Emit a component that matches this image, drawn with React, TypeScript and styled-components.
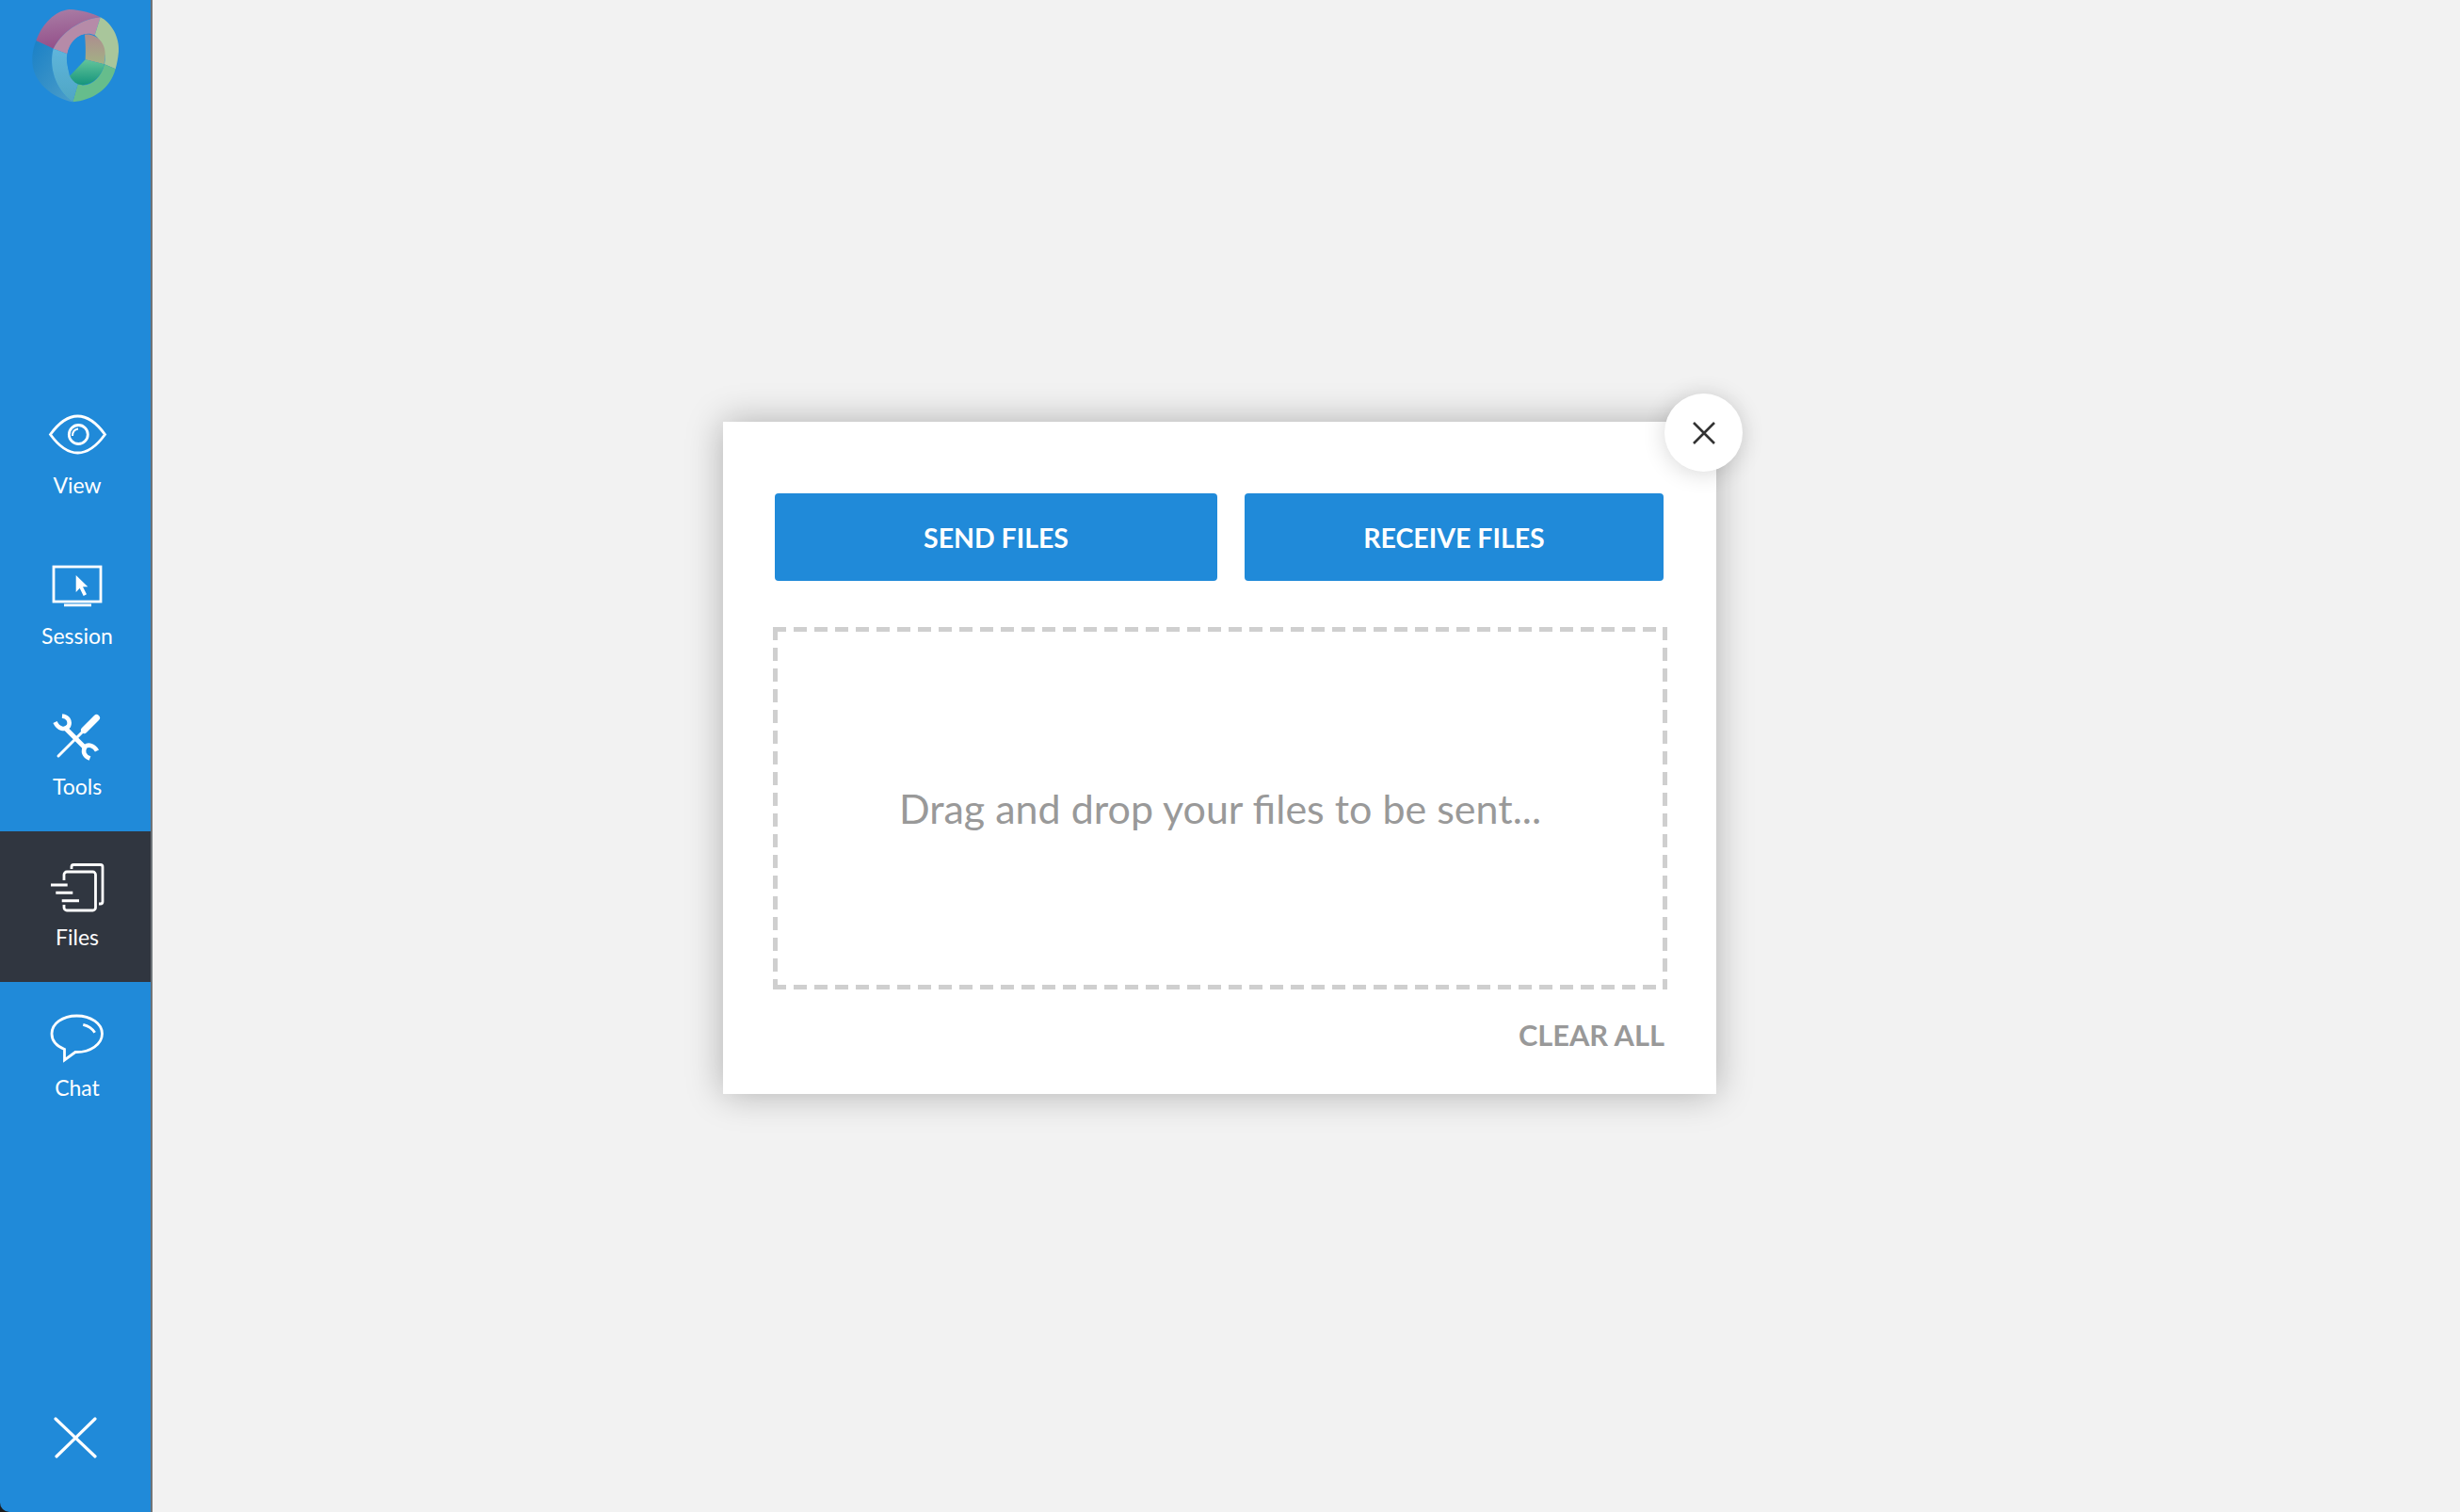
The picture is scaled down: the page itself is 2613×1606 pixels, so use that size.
import styled, { createGlobalStyle } from 'styled-components';
import type { ReactNode } from 'react';

const GlobalStyle = createGlobalStyle`
    html, body {
        margin: 0;
        padding: 0;
        background: #f2f2f2;
    }
    body {
        font-family: "Lato", "Open Sans", sans-serif;
    }
`

const Page = styled.div`
    display: flex;
    width: 2613px;
    height: 1606px;
    overflow: hidden;
    background: #1c1c1c;
`

const Sidebar = styled.nav`
    display: flex;
    flex-direction: column;
    flex-shrink: 0;
    width: 160px;
    height: 100%;
    background: #208ad9;
    border-right: 2px solid #6f7478;
    border-bottom-left-radius: 10px;
`

const LogoBlock = styled.div`
    height: 403px;
`

const NavItem = styled.div<{ $active?: boolean }>`
    display: flex;
    flex-direction: column;
    align-items: center;
    height: 160px;
    padding: 28px 0 0 4px;
    box-sizing: border-box;
    background: ${(p) => (p.$active ? '#303640' : 'transparent')};
`

const NavIcon = styled.svg`
    display: block;
    width: 64px;
    height: 64px;
    fill: none;
    stroke: #fff;
    stroke-width: 2.8;
`

const NavLabel = styled.span`
    margin-top: 5px;
    color: #fff;
    font-size: 23px;
    line-height: 30px;
`

const ExitButton = styled.div`
    display: flex;
    align-items: center;
    justify-content: center;
    height: 158px;
    margin-top: auto;
`

const Main = styled.main`
    flex-grow: 1;
    padding: 448px 0 0 606px;
    background: #f2f2f2;
`

const Modal = styled.section`
    position: relative;
    width: 1055px;
    height: 714px;
    padding: 76px 52px 0 53px;
    box-sizing: border-box;
    background: #fff;
    box-shadow: 0 0 36px rgba(0, 0, 0, 0.28);
`

const CloseButton = styled.div`
    position: absolute;
    top: -30px;
    right: -28px;
    display: flex;
    align-items: center;
    justify-content: center;
    width: 83px;
    height: 83px;
    border-radius: 50%;
    background: #fff;
    box-shadow: 0 2px 24px rgba(0, 0, 0, 0.16);
`

const ButtonRow = styled.div`
    display: grid;
    grid-template-columns: 470px 445px;
    gap: 29px;
    padding-left: 2px;
`

const ActionButton = styled.div`
    display: flex;
    align-items: center;
    justify-content: center;
    height: 93px;
    border-radius: 4px;
    background: #208ad9;
    color: #fff;
    font-size: 28.5px;
    font-weight: 700;
`

// the browser's own dashed border comes out too short, so the dashes are painted
const DropZone = styled.div`
    display: flex;
    align-items: center;
    justify-content: center;
    height: 385px;
    margin-top: 49px;
    color: #999;
    font-size: 43px;
    background-image:
        repeating-linear-gradient(90deg, #cfcfcf 0 14px, transparent 14px 22px),
        repeating-linear-gradient(90deg, #cfcfcf 0 14px, transparent 14px 22px),
        repeating-linear-gradient(180deg, #cfcfcf 0 14px, transparent 14px 22px),
        repeating-linear-gradient(180deg, #cfcfcf 0 14px, transparent 14px 22px);
    background-size: 100% 5px, 100% 5px, 5px 100%, 5px 100%;
    background-position: 0 0, 0 100%, 0 0, 100% 0;
    background-repeat: no-repeat;
`

const ClearAll = styled.div`
    margin-top: 29px;
    padding-right: 3px;
    color: #999;
    font-size: 30.8px;
    font-weight: 700;
    line-height: 40px;
    text-align: right;
`

const Logo = () => (
    <svg width="160" height="130" viewBox="0 0 480 390">
        <defs>
            <linearGradient id="wallPurple" x1="0" y1="0" x2="0.2" y2="1">
                <stop offset="0" stopColor="#aa7fa6" />
                <stop offset="1" stopColor="#94508a" />
            </linearGradient>
            <linearGradient id="wallBlue" x1="0" y1="0" x2="1" y2="1">
                <stop offset="0" stopColor="#1a80c6" />
                <stop offset="1" stopColor="#4c9ec9" />
            </linearGradient>
            <linearGradient id="faceCyan" x1="0" y1="0" x2="0" y2="1">
                <stop offset="0" stopColor="#5fb5dc" />
                <stop offset="1" stopColor="#4fa6c4" />
            </linearGradient>
            <linearGradient id="innerOlive" x1="0" y1="0" x2="0" y2="1">
                <stop offset="0" stopColor="#ad8d8f" />
                <stop offset="1" stopColor="#a3b184" />
            </linearGradient>
            <linearGradient id="innerGreen" x1="0" y1="0" x2="0" y2="1">
                <stop offset="0" stopColor="#62c49a" />
                <stop offset="1" stopColor="#16957c" />
            </linearGradient>
        </defs>
        <path d="M115 130C135 75 175 35 220 30C260 32 295 42 320 55C270 60 205 90 170 155Z" fill="url(#wallPurple)" />
        <path d="M115 130L170 155C155 210 175 285 232 325C170 315 100 260 103 190C103 165 108 148 115 130Z" fill="url(#wallBlue)" />
        <path d="M170 155C205 90 270 60 320 55L302 112C265 95 225 125 214 172Z" fill="#b68ba8" />
        <path d="M320 55C355 72 382 120 378 165C376 185 373 203 368 220L333 205C340 170 325 130 302 112Z" fill="#a9c69b" />
        <path d="M368 220C350 285 295 320 232 325L248 268C285 282 322 250 333 205Z" fill="#66bd8c" />
        <path d="M170 155L214 172C208 205 222 245 248 268L232 325C175 285 155 210 170 155Z" fill="url(#faceCyan)" />
        <path d="M270 110C235 115 212 150 214 190C215 210 218 228 222 242L272 190V150Z" fill="#208ad9" />
        <path d="M270 110C305 105 336 135 335 172L332 205L272 190C274 160 272 130 270 110Z" fill="url(#innerOlive)" />
        <path d="M272 190L332 205C325 245 285 280 248 268C235 262 228 252 222 242Z" fill="url(#innerGreen)" />
    </svg>
)

const ViewIcon = () => (
    <NavIcon viewBox="0 0 64 64">
        <path d="M3.5 30.5C14 16 23 11 32.5 11C42 11 51 16 61.5 30.5C51 45 42 50 32.5 50C23 50 14 45 3.5 30.5Z" />
        <circle cx="33.3" cy="30.5" r="10" />
        <path d="M27 32C27 27.5 29.5 25 33 24.5" strokeWidth="2" />
    </NavIcon>
)

const SessionIcon = () => (
    <NavIcon viewBox="0 0 64 64">
        <rect x="7" y="11" width="50" height="37" />
        <path d="M18 51.8H47" />
        <path d="M30.7 20L43.3 32.3H38L42 40.3L38.7 42L34.7 33.7L30.7 38Z" fill="#fff" stroke="none" />
    </NavIcon>
)

const ToolsIcon = () => (
    <NavIcon viewBox="0 0 64 64">
        <path d="M52.5 11.5L39.5 24.5" strokeWidth="7" strokeLinecap="round" />
        <path d="M39 25L12 52" strokeWidth="3" strokeLinecap="round" />
        <path d="M19 22L40 43" strokeWidth="5" />
        <path d="M16 9.5C22 10 25 15 23 20C19 25 12 23.5 8.5 16" strokeWidth="4.6" />
        <path d="M53 46.5C50 41 44 39 40.5 42C37.5 47 39 52 45.5 54.5" strokeWidth="4.6" />
    </NavIcon>
)

const FilesIcon = () => (
    <NavIcon viewBox="0 0 64 64">
        <path d="M26 12V9.5A2.2 2.2 0 0 1 28.2 7.5H56.8A2.2 2.2 0 0 1 59 9.7V46.8A2.2 2.2 0 0 1 56.8 49H55" />
        <path d="M18 24V18A3 3 0 0 1 21 15H48.5A3 3 0 0 1 51.5 18V53A3 3 0 0 1 48.5 56H21A3 3 0 0 1 18 53V50" />
        <path d="M4 29H21.7M9.3 37.3H27.3M15.7 45.7H34" strokeWidth="3" />
    </NavIcon>
)

const ChatIcon = () => (
    <NavIcon viewBox="0 0 64 64">
        <path d="M30 46.5C46 47 58.5 38 58.5 27C58.5 16 46.5 8 31.5 8C16.5 8 5 16 5 27C5 34 10 40 18.5 43.5V55Z" />
        <path d="M38.3 17.3C43.5 18.5 48 21.5 50.7 25.7" />
    </NavIcon>
)

const navItems: { label: string; icon: ReactNode; active?: boolean }[] = [
    { label: 'View', icon: <ViewIcon /> },
    { label: 'Session', icon: <SessionIcon /> },
    { label: 'Tools', icon: <ToolsIcon /> },
    { label: 'Files', icon: <FilesIcon />, active: true },
    { label: 'Chat', icon: <ChatIcon /> },
]

export default function App() {
    return (
        <Page>
            <GlobalStyle />
            <Sidebar>
                <LogoBlock>
                    <Logo />
                </LogoBlock>
                {navItems.map((item) => (
                    <NavItem key={item.label} $active={item.active}>
                        {item.icon}
                        <NavLabel>{item.label}</NavLabel>
                    </NavItem>
                ))}
                <ExitButton>
                    <svg width="46" height="44" viewBox="0 0 46 44" fill="none" stroke="#fff" strokeWidth="3.2" strokeLinecap="round">
                        <path d="M2 2L44 42M44 2L3 42" />
                    </svg>
                </ExitButton>
            </Sidebar>
            <Main>
                <Modal>
                    <CloseButton>
                        <svg width="26" height="26" viewBox="0 0 26 26" fill="none" stroke="#333" strokeWidth="2.6">
                            <path d="M2 2L24 24M24 2L2 24" />
                        </svg>
                    </CloseButton>
                    <ButtonRow>
                        <ActionButton>SEND FILES</ActionButton>
                        <ActionButton>RECEIVE FILES</ActionButton>
                    </ButtonRow>
                    <DropZone>Drag and drop your files to be sent...</DropZone>
                    <ClearAll>CLEAR ALL</ClearAll>
                </Modal>
            </Main>
        </Page>
    );
}
